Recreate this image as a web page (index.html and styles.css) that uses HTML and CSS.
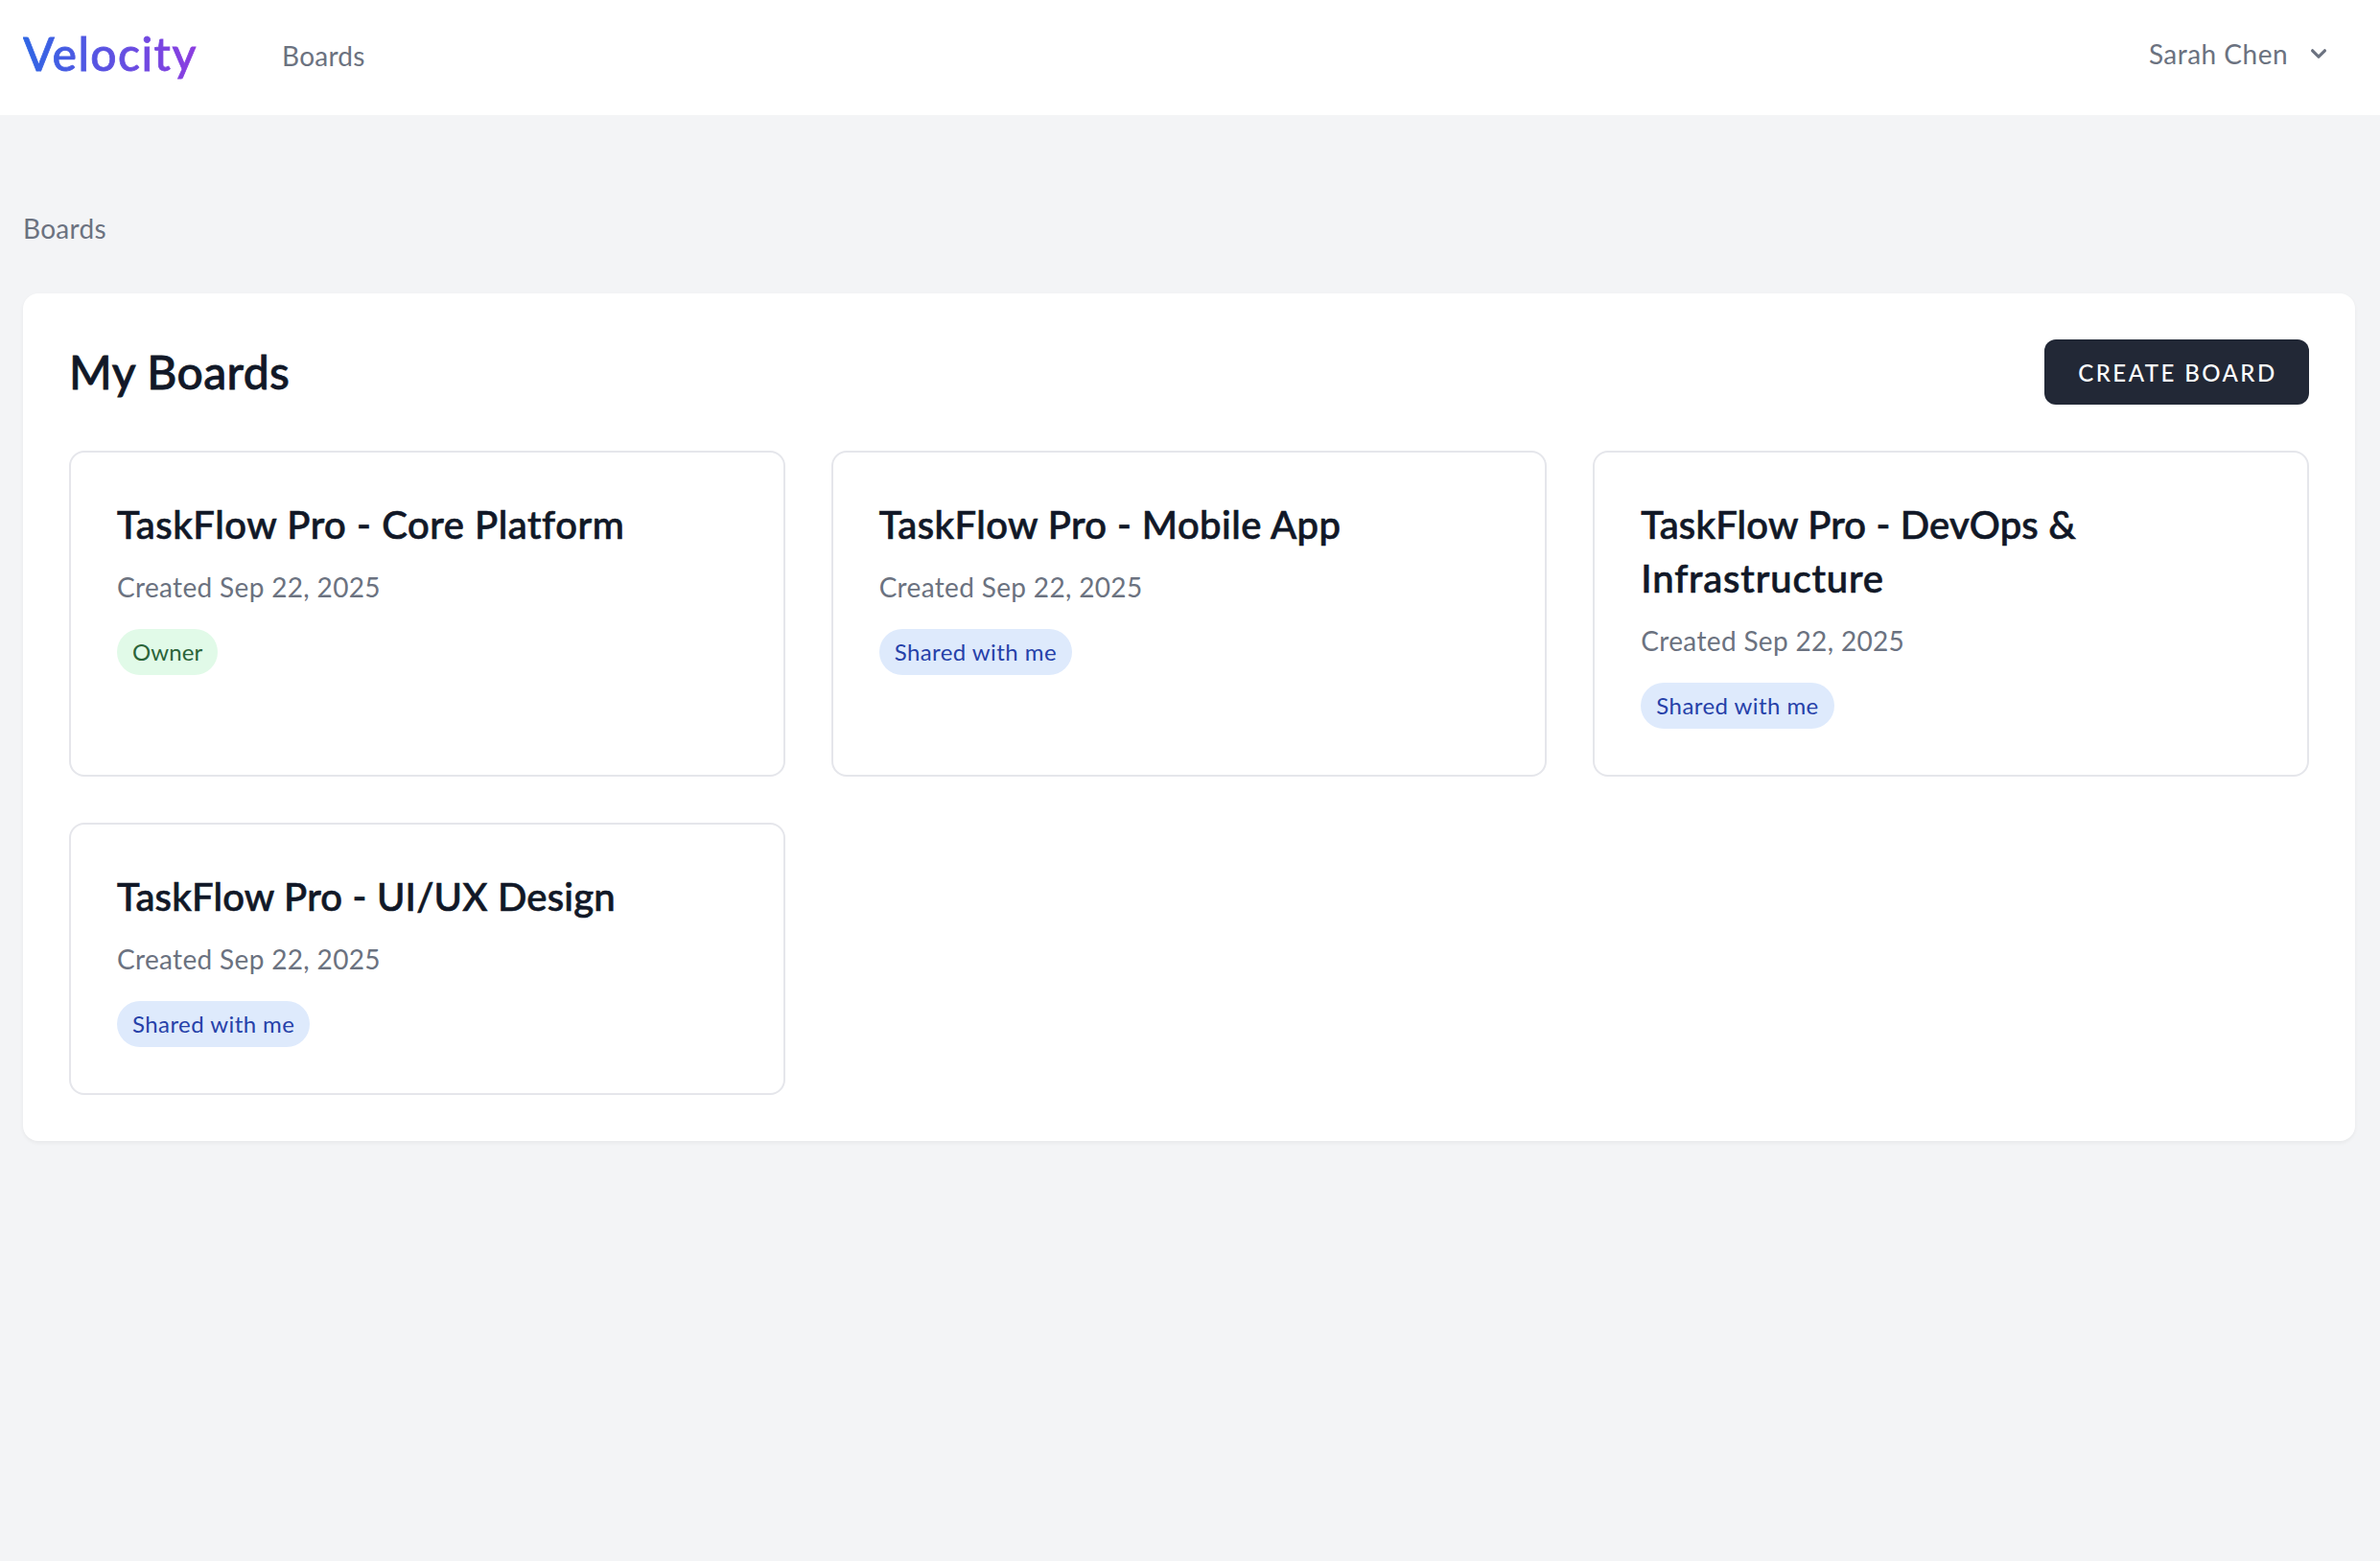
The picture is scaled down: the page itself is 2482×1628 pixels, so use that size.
FILE: index.html
```html
<!DOCTYPE html>
<html lang="en">
<head>
<meta charset="utf-8">
<title>Velocity</title>
<link rel="stylesheet" href="styles.css">
</head>
<body>
<header class="navbar">
  <a class="logo">Velocity</a>
  <nav class="nav-links"><a class="nav-link">Boards</a></nav>
  <button class="user-menu">
    <span class="user-name">Sarah Chen</span>
    <svg class="chevron" viewBox="0 0 20 20" fill="currentColor"><path fill-rule="evenodd" clip-rule="evenodd" d="M5.293 7.293a1 1 0 011.414 0L10 10.586l3.293-3.293a1 1 0 111.414 1.414l-4 4a1 1 0 01-1.414 0l-4-4a1 1 0 010-1.414z"/></svg>
  </button>
</header>
<main class="page">
  <div class="breadcrumb">Boards</div>
  <section class="panel">
    <div class="panel-header">
      <h1 class="panel-title">My Boards</h1>
      <button class="create-button">Create Board</button>
    </div>
    <div class="board-grid">
      <article class="board">
        <h2 class="board-title board-title-core">TaskFlow Pro - Core Platform</h2>
        <p class="board-date">Created Sep 22, 2025</p>
        <span class="badge badge-owner">Owner</span>
      </article>
      <article class="board">
        <h2 class="board-title board-title-mobile">TaskFlow Pro - Mobile App</h2>
        <p class="board-date">Created Sep 22, 2025</p>
        <span class="badge badge-shared">Shared with me</span>
      </article>
      <article class="board">
        <h2 class="board-title board-title-devops">TaskFlow Pro - DevOps &amp;<br><span class="board-title-wide">Infrastructure</span></h2>
        <p class="board-date">Created Sep 22, 2025</p>
        <span class="badge badge-shared">Shared with me</span>
      </article>
      <article class="board">
        <h2 class="board-title board-title-design">TaskFlow Pro - UI/UX Design</h2>
        <p class="board-date">Created Sep 22, 2025</p>
        <span class="badge badge-shared">Shared with me</span>
      </article>
    </div>
  </section>
</main>
</body>
</html>
```
FILE: styles.css
```css
* { box-sizing: border-box; }

body {
  margin: 0;
  min-height: 100vh;
  background: #f3f4f6;
  color: #6b7280;
  font: 400 28px/40px Lato, "Liberation Sans", sans-serif;
}

h1, h2, p { margin: 0; }
button { border: 0; background: none; font: inherit; color: inherit; }

.navbar {
  display: flex;
  align-items: center;
  height: 120px;
  padding: 0 48px 0 24px;
  background: #fff;
}

.logo {
  width: 182px;
  padding-bottom: 9px;
  font-size: 48px;
  font-weight: 500;
  line-height: 64px;
  letter-spacing: 1.45px;
  color: transparent;
  -webkit-text-stroke: 0.8px transparent;
  background: linear-gradient(90deg, #2f66e4, #8c3ce0);
  -webkit-background-clip: text;
  background-clip: text;
}

.nav-links { margin-left: 88px; padding-bottom: 4px; }
.nav-link { letter-spacing: 0.25px; }

.user-menu {
  display: flex;
  align-items: center;
  gap: 16px;
  margin-left: auto;
  padding: 0 0 8px;
  letter-spacing: 0.48px;
}

.chevron { width: 32px; height: 32px; }

.page { padding: 98px 26px 0 24px; }
.breadcrumb { margin-bottom: 48px; letter-spacing: 0.3px; }

.panel {
  padding: 48px;
  background: #fff;
  border-radius: 16px;
  box-shadow: 0 2px 4px rgba(0, 0, 0, 0.05);
}

.panel-header {
  display: flex;
  align-items: center;
  justify-content: space-between;
  height: 68px;
  margin-bottom: 48px;
}

.panel-title {
  padding-bottom: 1px;
  font-size: 48px;
  font-weight: 500;
  line-height: 64px;
  letter-spacing: 0.4px;
  color: #111827;
  -webkit-text-stroke: 0.8px #111827;
}

.create-button {
  width: 276px;
  height: 68px;
  padding: 1px 0 0 2px;
  border-radius: 12px;
  background: #222836;
  color: #fff;
  font-size: 24px;
  font-weight: 500;
  line-height: 32px;
  letter-spacing: 2.45px;
  text-transform: uppercase;
}

.board-grid {
  display: grid;
  grid-template-columns: repeat(3, 1fr);
  gap: 48px;
}

.board {
  padding: 48px;
  border: 2px solid #e5e6eb;
  border-radius: 16px;
}

.board-title {
  margin: -1px 0 17px;
  font-size: 40px;
  font-weight: 500;
  line-height: 56px;
  color: #111827;
  -webkit-text-stroke: 0.7px #111827;
}

.board-title-core { letter-spacing: 0.55px; }
.board-title-mobile { letter-spacing: 0.42px; }
.board-title-devops { letter-spacing: 0.17px; }
.board-title-design { letter-spacing: 0.2px; }
.board-title-wide { letter-spacing: 0.85px; }

.board-date { margin-bottom: 24px; letter-spacing: 0.34px; }

.badge {
  display: block;
  width: fit-content;
  padding: 8px 16px;
  border-radius: 24px;
  font-size: 24px;
  line-height: 32px;
}

.badge-owner { background: #e1fae8; color: #2b6439; letter-spacing: 0.1px; }
.badge-shared { background: #deeafc; color: #2641a9; letter-spacing: 0.43px; }
```
